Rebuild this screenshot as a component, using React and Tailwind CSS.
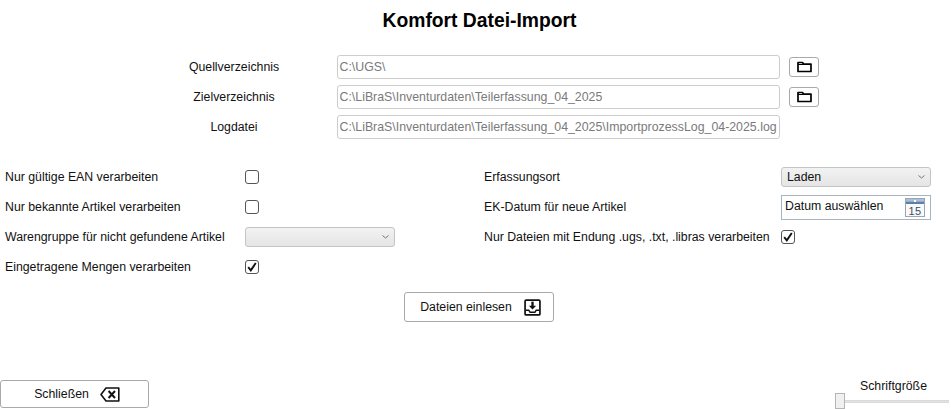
import React from 'react';

const FolderIcon = () => (
  <svg width="15" height="12" viewBox="0 0 15 12" fill="none">
    <path d="M1 10.5V1.5h4.5l1 1.5H14v7.5z" stroke="#000" strokeWidth="1.7" strokeLinejoin="round" />
    <path d="M1 3.5h13" stroke="#000" strokeWidth="1" />
  </svg>
);

const ImportIcon = () => (
  <svg width="17" height="17" viewBox="0 0 16 16" fill="none">
    <rect x="1" y="1" width="14" height="14" rx="1" stroke="#111" strokeWidth="1.6" />
    <path d="M8 2.5v4.5" stroke="#111" strokeWidth="2.2" />
    <path d="M4.6 6.4h6.8L8 9.8z" fill="#111" />
    <path d="M1.5 10.5h3l1.2 2h4.6l1.2-2h3" stroke="#111" strokeWidth="1.4" />
  </svg>
);

const BackspaceIcon = () => (
  <svg width="20" height="15" viewBox="0 0 20 15" fill="none">
    <path d="M6 1h12.8v13H6L1 7.5z" stroke="#111" strokeWidth="1.6" strokeLinejoin="round" />
    <path d="M8.6 4l6.4 7M15 4l-6.4 7" stroke="#111" strokeWidth="2" />
  </svg>
);

const CalendarIcon = () => (
  <svg width="20" height="19" viewBox="0 0 20 19">
    <rect x="0.5" y="0.5" width="19" height="18" fill="#f7f9fb" stroke="#9aa6b4" />
    <rect x="1" y="1" width="18" height="2.5" fill="#a9c0d8" />
    <rect x="1" y="3.5" width="18" height="2.5" fill="#5f7fa6" />
    <rect x="9" y="2" width="2" height="2" fill="#fff" />
    <text x="10" y="16.5" textAnchor="middle" fontSize="11" letterSpacing="0.5" fontFamily="Liberation Sans" fill="#3f4d5c">15</text>
  </svg>
);

const PathRow = ({ label, value, hasButton }) => (
  <div className="flex items-center">
    <span className="w-[168px] text-center">{label}</span>
    <div className="ml-[19px] w-[443px] h-[24px] flex items-center pl-[1.5px] border border-[#cdcdcd] rounded-[3px] text-[12.35px] text-[#7a7a7a] whitespace-nowrap">{value}</div>
    {hasButton && (
      <button className="ml-[9px] w-[30px] h-[20px] flex items-center justify-center border border-[#a9a9a9] rounded-[3px] bg-white">
        <FolderIcon />
      </button>
    )}
  </div>
);

const Checkbox = ({ checked }) => (
  <span className="w-[14px] h-[14px] flex items-center justify-center border border-[#555] rounded-[3px] bg-white">
    {checked && (
      <svg width="10" height="10" viewBox="0 0 10 10" fill="none">
        <path d="M1.2 5.2l2.6 3.2L8.8 1" stroke="#111" strokeWidth="1.9" />
      </svg>
    )}
  </span>
);

const Chevron = () => (
  <svg width="7" height="4" viewBox="0 0 7 4" fill="none">
    <path d="M0.5 0.5l3 2.5 3-2.5" stroke="#777" strokeWidth="1" />
  </svg>
);

const Select = ({ value, width }) => (
  <div className={`${width} h-[20px] flex items-center justify-between pl-[5px] pr-[5px] border border-[#c4c4c4] rounded-[3px] bg-gradient-to-b from-[#f2f2f2] to-[#e5e5e5]`}>
    <span>{value}</span>
    <Chevron />
  </div>
);

const Row = ({ label, children, labelWidth }) => (
  <div className="h-[30px] flex items-center">
    <span className={`${labelWidth} whitespace-nowrap`}>{label}</span>
    {children}
  </div>
);

const App = () => {
  return (
    <div className="h-[409px] w-[951px] overflow-hidden bg-white flex flex-col text-[12.3px] text-[#111] font-['Liberation_Sans',Arial,sans-serif]">
      <h1 className="mt-[10px] h-[22px] pl-[8px] text-center text-[19.3px] leading-[22px] font-bold text-black">Komfort Datei-Import</h1>

      <div className="mt-[23px] pl-[150px] flex flex-col gap-[6px]">
        <PathRow label="Quellverzeichnis" value="C:\UGS\" hasButton />
        <PathRow label="Zielverzeichnis" value="C:\LiBraS\Inventurdaten\Teilerfassung_04_2025" hasButton />
        <PathRow label="Logdatei" value="C:\LiBraS\Inventurdaten\Teilerfassung_04_2025\ImportprozessLog_04-2025.log" />
      </div>

      <div className="mt-[23px] pl-[5px] flex">
        <div className="w-[479px]">
          <Row label="Nur gültige EAN verarbeiten" labelWidth="w-[240px]"><Checkbox /></Row>
          <Row label="Nur bekannte Artikel verarbeiten" labelWidth="w-[240px]"><Checkbox /></Row>
          <Row label="Warengruppe für nicht gefundene Artikel" labelWidth="w-[240px]"><Select value="" width="w-[150px]" /></Row>
          <Row label="Eingetragene Mengen verarbeiten" labelWidth="w-[240px]"><Checkbox checked /></Row>
        </div>
        <div>
          <Row label="Erfassungsort" labelWidth="w-[297px]"><Select value="Laden" width="w-[150px]" /></Row>
          <Row label="EK-Datum für neue Artikel" labelWidth="w-[297px]">
            <div className="w-[150px] h-[25px] flex items-center justify-between pl-[3px] pr-[5px] border border-[#a9b4bf] bg-white">
              <span className="pb-[2px]">Datum auswählen</span>
              <CalendarIcon />
            </div>
          </Row>
          <Row label="Nur Dateien mit Endung .ugs, .txt, .libras verarbeiten" labelWidth="w-[297px]"><Checkbox checked /></Row>
        </div>
      </div>

      <div className="mt-[10px] flex pl-[404px]">
        <button className="w-[150px] h-[30px] flex items-center justify-center pl-[3px] gap-[12px] border border-[#a9a9a9] rounded-[3px] bg-white">
          Dateien einlesen
          <ImportIcon />
        </button>
      </div>

      <div className="mt-auto flex justify-between items-end">
        <button className="mb-[1px] w-[149px] h-[28px] flex items-center justify-center pl-[5px] gap-[11px] border border-[#a9a9a9] rounded-[3px] bg-white">
          Schließen
          <BackspaceIcon />
        </button>
        <div className="w-[116px] flex flex-col">
          <span className="ml-[25px] h-[16px] leading-[18px]">Schriftgröße</span>
          <div className="h-[16px] flex items-start">
            <div className="w-[10px] h-[16px] bg-[#f0f0f0] border border-[#b5b5b5]"></div>
            <div className="mt-[7px] w-[104px] h-[3px] bg-[#e2e2e2] border-y border-[#dadada]"></div>
          </div>
        </div>
      </div>
    </div>
  );
};

export default App;
